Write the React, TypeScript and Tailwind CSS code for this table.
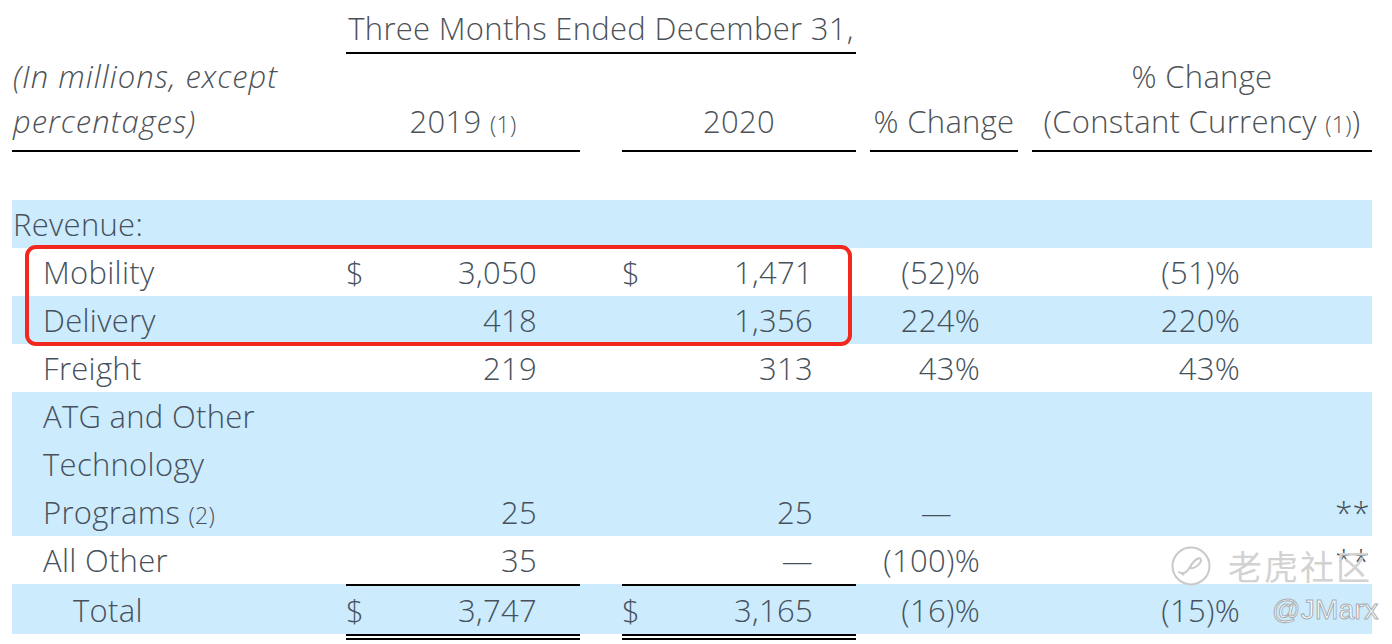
import type { ReactNode } from "react";

const GRID =
  "grid grid-cols-[334px_234px_42px_234px_14px_148px_14px_340px] items-end";
const BLUE = "bg-[#ccebfc]";

type RowProps = {
  blue?: boolean;
  label: ReactNode;
  indent?: string;
  d1?: boolean;
  v1?: ReactNode;
  d2?: boolean;
  v2?: ReactNode;
  p1?: ReactNode;
  p1Class?: string;
  p2?: ReactNode;
  p2Class?: string;
  total?: boolean;
};

function Money({ dollar, value, total }: { dollar?: boolean; value?: ReactNode; total?: boolean }) {
  return (
    <div
      className={`flex justify-between pr-[43px] leading-[48px] ${
        total ? "border-t-2 border-black" : ""
      }`}
    >
      <span>{dollar ? "$" : ""}</span>
      <span>{value}</span>
    </div>
  );
}

function Row({
  blue,
  label,
  indent = "pl-[31px]",
  d1,
  v1,
  d2,
  v2,
  p1,
  p1Class = "pr-[38px]",
  p2,
  p2Class = "pr-[132px]",
  total,
}: RowProps) {
  return (
    <div className={`${GRID} ${blue ? BLUE : ""}`}>
      <div className={`${indent} leading-[48px]`}>{label}</div>
      <Money dollar={d1} value={v1} total={total} />
      <div />
      <Money dollar={d2} value={v2} total={total} />
      <div />
      <div className={`text-right leading-[48px] ${p1Class}`}>{p1}</div>
      <div />
      <div className={`text-right leading-[48px] ${p2Class}`}>{p2}</div>
    </div>
  );
}

function Note({ n }: { n: number }) {
  return <span className="text-[23px] leading-none">({n})</span>;
}

function Watermark() {
  return (
    <>
      <div className="absolute left-[1170px] top-[545px] flex items-center gap-[16px]">
        <svg width="42" height="42" viewBox="0 0 42 42" fill="none">
          <circle cx="21" cy="21" r="18.5" stroke="#c9c9c9" strokeWidth="2" />
          <path
            d="M9 27c3 2 7 1 9-2s5-9 9-11 5 1 3 4-7 6-9 5"
            stroke="#c9c9c9"
            strokeWidth="2"
            strokeLinecap="round"
          />
          <circle cx="13" cy="29" r="1.6" fill="#c9c9c9" />
        </svg>
        <span className="font-['Noto_Sans_CJK_SC',sans-serif] text-[34px] font-normal leading-none tracking-[2px] text-[#d2d2d2]">
          老虎社区
        </span>
      </div>
      <div className="absolute left-[1272px] top-[596px] font-['Liberation_Sans',sans-serif] text-[28px] font-normal leading-none text-white [-webkit-text-stroke:1px_#a8adb2]">
        @JMarx
      </div>
    </>
  );
}

export default function App() {
  return (
    <div className="relative h-[644px] w-[1392px] overflow-hidden bg-white font-['Open_Sans',sans-serif] text-[31px] font-[350] tracking-[0.3px] text-[#46515c]">
      <div className="ml-[12px] w-[1360px] pt-[4px]">
        {/* header */}
        <div className={GRID}>
          <div />
          <div className="col-span-3 flex justify-center whitespace-nowrap border-b-2 border-black leading-[48px] text-[#4d5257]">
            Three Months Ended December 31,
          </div>
        </div>
        <div className={`${GRID} text-[#4d5257]`}>
          <div className="border-b-2 border-black pb-[6px] italic leading-[45px] tracking-[1px]">
            <div className="pl-[1px]">(In millions, except</div>
            <div className="pl-[1px]">percentages)</div>
          </div>
          <div className="border-b-2 border-black pb-[6px] text-center leading-[45px]">
            2019 <Note n={1} />
          </div>
          <div />
          <div className="border-b-2 border-black pb-[6px] text-center leading-[45px]">2020</div>
          <div />
          <div className="flex justify-center whitespace-nowrap border-b-2 border-black pb-[6px] leading-[45px]">
            % Change
          </div>
          <div />
          <div className="flex flex-col items-center whitespace-nowrap border-b-2 border-black pb-[6px] leading-[45px]">
            <div>% Change</div>
            <div>
              (Constant Currency <Note n={1} />)
            </div>
          </div>
        </div>

        {/* body */}
        <div className="mt-[48px]">
          <Row blue label="Revenue:" indent="pl-[1px]" />
          <Row label="Mobility" d1 v1="3,050" d2 v2="1,471" p1="(52)%" p2="(51)%" />
          <Row blue label="Delivery" v1="418" v2="1,356" p1="224%" p2="220%" />
          <Row label="Freight" v1="219" v2="313" p1="43%" p2="43%" />
          <Row
            blue
            label={
              <>
                <div>ATG and Other</div>
                <div>Technology</div>
                <div>
                  Programs <Note n={2} />
                </div>
              </>
            }
            v1="25"
            v2="25"
            p1="—"
            p1Class="pr-[66px]"
            p2="**"
            p2Class="pr-[2px]"
          />
          <Row
            label="All Other"
            v1="35"
            v2="—"
            p1="(100)%"
            p2="**"
            p2Class="pr-[2px]"
          />
          <Row
            blue
            total
            label="Total"
            indent="pl-[61px]"
            d1
            v1="3,747"
            d2
            v2="3,165"
            p1="(16)%"
            p2="(15)%"
          />
          <div className={GRID}>
            <div />
            <div className="h-[6px] border-y-2 border-black" />
            <div />
            <div className="h-[6px] border-y-2 border-black" />
          </div>
        </div>
      </div>

      {/* highlight box */}
      <div className="absolute left-[25px] top-[245px] h-[101px] w-[827px] rounded-[11px] border-4 border-[#f2271d]" />

      <Watermark />
    </div>
  );
}
